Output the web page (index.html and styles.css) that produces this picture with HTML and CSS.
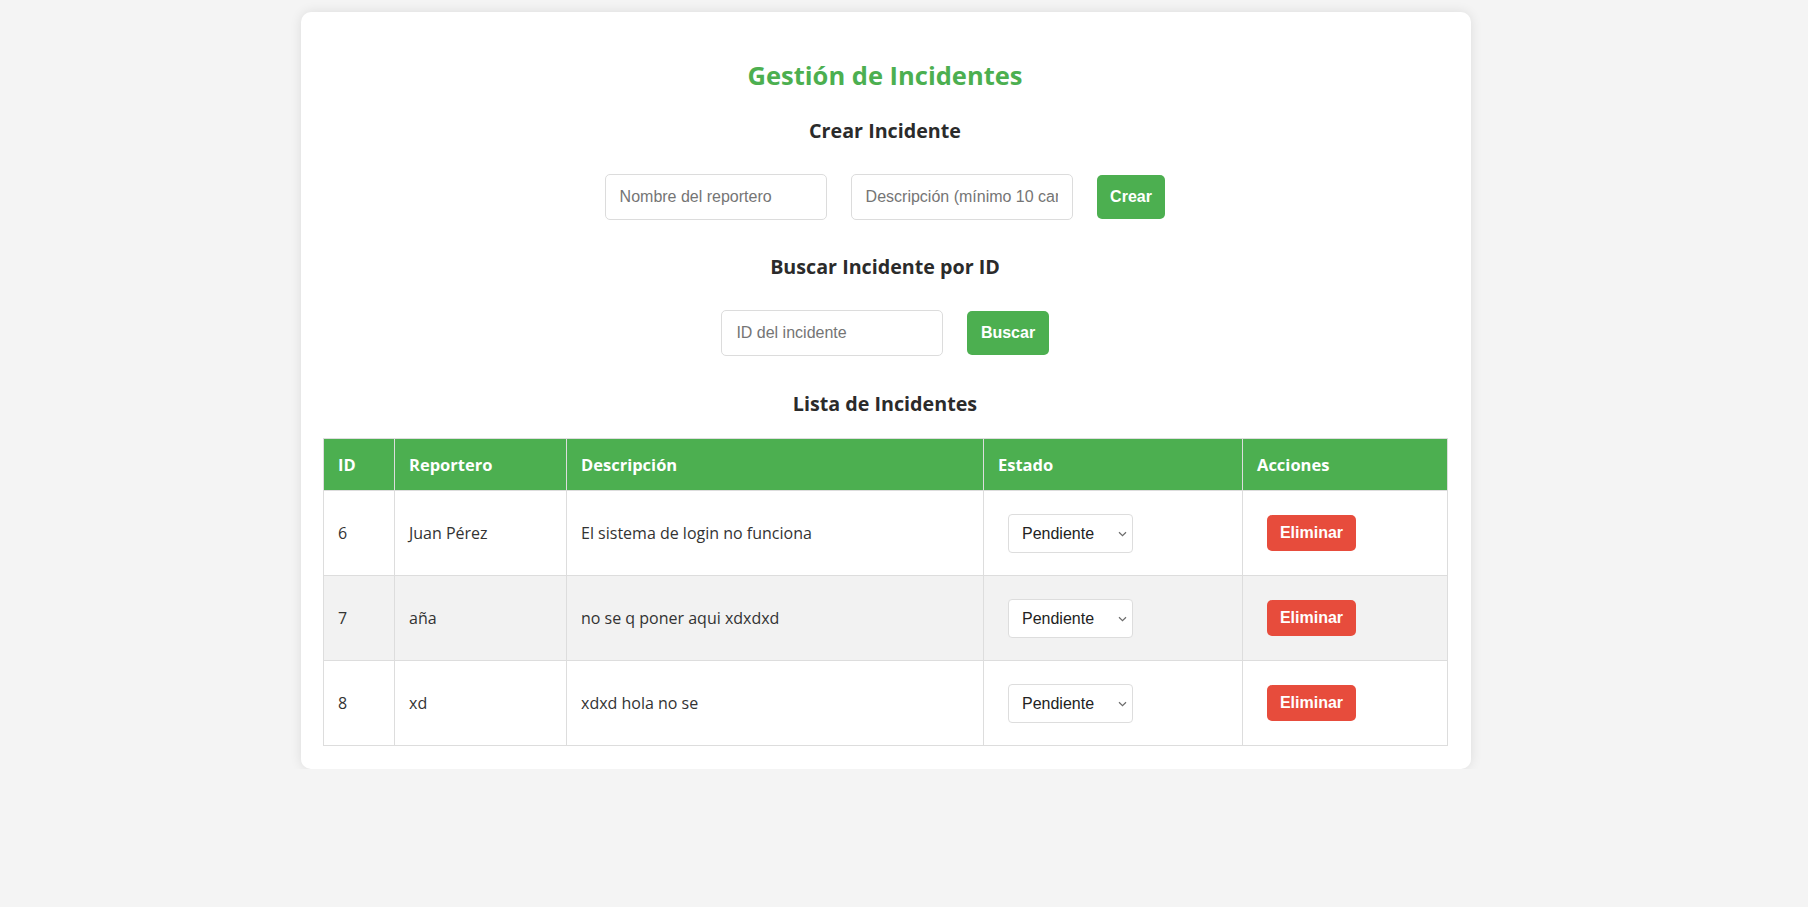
FILE: index.html
```html
<!DOCTYPE html>
<html lang="es">
<head>
<meta charset="utf-8">
<title>Gestión de Incidentes</title>
<link rel="stylesheet" href="styles.css">
</head>
<body>
<div class="card">
  <h1 class="title">Gestión de Incidentes</h1>

  <h2 class="section-title">Crear Incidente</h2>
  <form class="form-row form-create">
    <input class="field" type="text" placeholder="Nombre del reportero">
    <input class="field" type="text" placeholder="Descripción (mínimo 10 caracteres)">
    <button class="btn btn-green" type="button">Crear</button>
  </form>

  <h2 class="section-title">Buscar Incidente por ID</h2>
  <form class="form-row form-search">
    <input class="field" type="text" placeholder="ID del incidente">
    <button class="btn btn-green" type="button">Buscar</button>
  </form>

  <h2 class="section-title list-title">Lista de Incidentes</h2>
  <table class="incidents">
    <colgroup>
      <col class="c-id"><col class="c-rep"><col class="c-desc"><col class="c-state"><col class="c-act">
    </colgroup>
    <thead>
      <tr><th>ID</th><th>Reportero</th><th>Descripción</th><th>Estado</th><th>Acciones</th></tr>
    </thead>
    <tbody>
      <tr>
        <td>6</td><td>Juan Pérez</td><td>El sistema de login no funciona</td>
        <td><span class="select-wrap"><select class="state"><option>Pendiente</option><option>En proceso</option><option>Resuelto</option></select><svg class="chev" width="9" height="6" viewBox="0 0 9 6"><path d="M1 1.2 L4.5 4.6 L8 1.2" fill="none" stroke="#6b6b6b" stroke-width="1.2"/></svg></span></td>
        <td><button class="btn btn-red" type="button">Eliminar</button></td>
      </tr>
      <tr>
        <td>7</td><td>aña</td><td>no se q poner aqui xdxdxd</td>
        <td><span class="select-wrap"><select class="state"><option>Pendiente</option><option>En proceso</option><option>Resuelto</option></select><svg class="chev" width="9" height="6" viewBox="0 0 9 6"><path d="M1 1.2 L4.5 4.6 L8 1.2" fill="none" stroke="#6b6b6b" stroke-width="1.2"/></svg></span></td>
        <td><button class="btn btn-red" type="button">Eliminar</button></td>
      </tr>
      <tr>
        <td>8</td><td>xd</td><td>xdxd hola no se</td>
        <td><span class="select-wrap"><select class="state"><option>Pendiente</option><option>En proceso</option><option>Resuelto</option></select><svg class="chev" width="9" height="6" viewBox="0 0 9 6"><path d="M1 1.2 L4.5 4.6 L8 1.2" fill="none" stroke="#6b6b6b" stroke-width="1.2"/></svg></span></td>
        <td><button class="btn btn-red" type="button">Eliminar</button></td>
      </tr>
    </tbody>
  </table>
</div>
</body>
</html>
```

FILE: styles.css
```css
* { box-sizing: border-box; }

html, body {
  margin: 0;
  padding: 0;
  background: #f4f4f4;
}

body {
  font-family: "Open Sans", "Noto Sans", sans-serif;
  color: #333;
  font-size: 16px;
}

.card {
  width: 1170px;
  margin: 12px 0 0 301px;
  padding: 46px 24px 23px 22px;
  background: #fff;
  border-radius: 10px;
  box-shadow: 0 0 12px rgba(0, 0, 0, 0.1);
}

.title {
  margin: 0 0 25px;
  text-align: center;
  color: #4caf50;
  font-size: 25.5px;
  font-weight: 700;
  line-height: 34.7px;
}

.section-title {
  margin: 0 0 29.5px;
  text-align: center;
  color: #2b2b2b;
  font-size: 19.7px;
  font-weight: 700;
  line-height: 26.8px;
}

.list-title {
  margin-bottom: 20px;
}

.form-row {
  display: flex;
  justify-content: center;
  align-items: center;
  gap: 24px;
  margin: 0 0 34px;
}

.form-search {
  margin-bottom: 35px;
}

.field {
  width: 222px;
  height: 46px;
  padding: 0 14px;
  border: 1px solid #dcdcdc;
  border-radius: 5px;
  font-family: "Liberation Sans", Arial, sans-serif;
  font-size: 16px;
  color: #333;
  background: #fff;
  outline: none;
}

.field::placeholder {
  color: #757575;
}

.btn {
  border: none;
  border-radius: 5px;
  color: #fff;
  font-family: "Liberation Sans", Arial, sans-serif;
  font-size: 16px;
  font-weight: 700;
  cursor: pointer;
}

.btn-green {
  height: 44px;
  padding: 0 13.5px;
  background: #4caf50;
}

.btn-red {
  height: 36px;
  width: 89px;
  padding: 0;
  margin-left: 10px;
  background: #e74c3c;
  vertical-align: middle;
}

.incidents {
  width: 100%;
  border-collapse: collapse;
  table-layout: fixed;
}

.c-id { width: 71px; }
.c-rep { width: 172px; }
.c-desc { width: 417px; }
.c-state { width: 259px; }
.c-act { width: 205px; }

.incidents th,
.incidents td {
  border: 1px solid #ddd;
  text-align: left;
  padding: 0 14px;
}

.incidents th {
  height: 52px;
  background: #4caf50;
  color: #fff;
  font-size: 16.5px;
  font-weight: 700;
}

.incidents td {
  height: 85px;
  font-size: 16px;
  color: #333;
  vertical-align: middle;
}

.incidents tbody tr:nth-child(even) td {
  background: #f2f2f2;
}

.select-wrap {
  position: relative;
  display: inline-block;
  margin-left: 10px;
  vertical-align: middle;
}

.state {
  display: block;
  width: 125px;
  height: 39px;
  padding: 0 20px 0 13px;
  border: 1px solid #ddd;
  border-radius: 4px;
  background: #fff;
  font-family: "Liberation Sans", Arial, sans-serif;
  font-size: 16px;
  color: #222;
  -webkit-appearance: none;
  appearance: none;
}

.chev {
  position: absolute;
  right: 6px;
  top: 17px;
  pointer-events: none;
}
```
